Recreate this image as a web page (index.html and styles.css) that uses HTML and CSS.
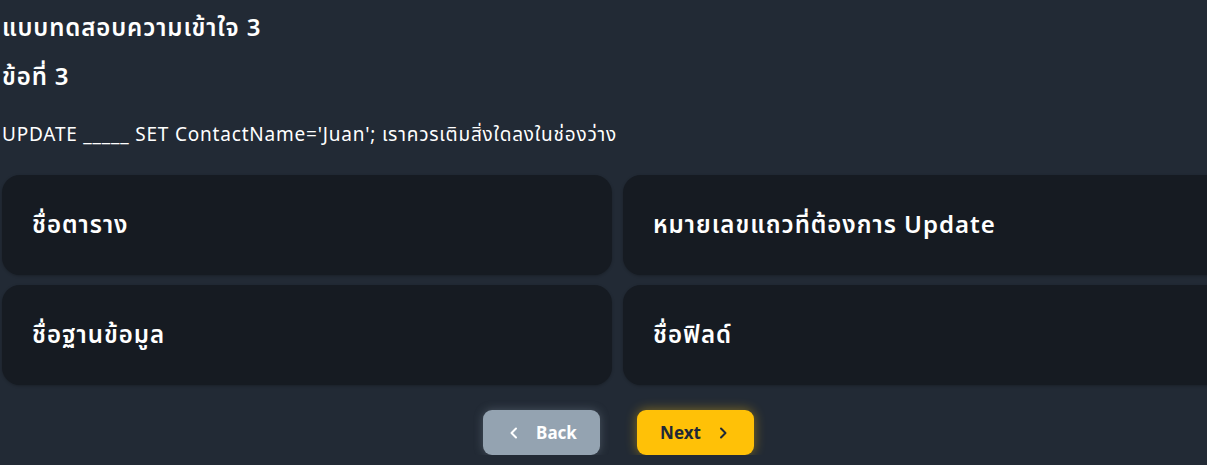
FILE: index.html
```html
<!DOCTYPE html>
<html lang="th">
<head>
<meta charset="utf-8">
<title>แบบทดสอบความเข้าใจ 3</title>
<link rel="stylesheet" href="styles.css">
</head>
<body>
<main class="quiz">
  <h1 class="quiz-title">แบบทดสอบความเข้าใจ 3</h1>
  <h2 class="quiz-number">ข้อที่ 3</h2>
  <p class="quiz-question">UPDATE _____ SET ContactName='Juan'; เราควรเติมสิ่งใดลงในช่องว่าง</p>
  <div class="choices">
    <button class="choice">ชื่อตาราง</button>
    <button class="choice">หมายเลขแถวที่ต้องการ Update</button>
    <button class="choice">ชื่อฐานข้อมูล</button>
    <button class="choice">ชื่อฟิลด์</button>
  </div>
  <nav class="nav">
    <button class="btn btn-back">
      <svg class="chev" viewBox="0 0 16 16" width="16" height="16"><path d="M10 3.5 5.5 8l4.5 4.5" fill="none" stroke="currentColor" stroke-width="2" stroke-linecap="round" stroke-linejoin="round"/></svg>
      <span>Back</span>
    </button>
    <button class="btn btn-next">
      <span>Next</span>
      <svg class="chev" viewBox="0 0 16 16" width="16" height="16"><path d="M6 3.5 10.5 8 6 12.5" fill="none" stroke="currentColor" stroke-width="2" stroke-linecap="round" stroke-linejoin="round"/></svg>
    </button>
  </nav>
</main>
</body>
</html>
```
FILE: styles.css
```css
html, body {
  margin: 0;
  padding: 0;
  background: #222a35;
  overflow: hidden;
}
body {
  font-family: "Noto Sans", "Noto Sans Thai", "Open Sans", sans-serif;
  color: #ffffff;
}
.quiz {
  width: 1233px;
  padding: 0 2px;
  box-sizing: content-box;
}
.quiz-title {
  margin: 0;
  padding-top: 10px;
  font-size: 24px;
  font-weight: 600;
  line-height: 34px;
  letter-spacing: 0.9px;
}
.quiz-number {
  margin: 15px 0 0;
  font-size: 24px;
  font-weight: 600;
  line-height: 34px;
  letter-spacing: 0.9px;
}
.quiz-question {
  margin: 27px 0 0;
  font-size: 19px;
  font-weight: 400;
  line-height: 28px;
  letter-spacing: 0.8px;
}
.choices {
  margin-top: 27px;
  display: grid;
  grid-template-columns: 610px 610px;
  column-gap: 11px;
  row-gap: 10px;
}
.choice {
  height: 100px;
  border: none;
  border-radius: 18px;
  background: #161b22;
  color: #ffffff;
  font-family: inherit;
  font-size: 24px;
  font-weight: 600;
  letter-spacing: 1px;
  text-align: left;
  padding: 0 30px;
  box-shadow: 0 1px 3px rgba(0,0,0,0.25);
}
.nav {
  margin-top: 25px;
  display: flex;
  justify-content: center;
  gap: 37px;
}
.btn {
  width: 117px;
  height: 45px;
  border: none;
  border-radius: 9px;
  font-family: inherit;
  font-size: 17px;
  font-weight: 700;
  display: flex;
  align-items: center;
  justify-content: center;
  gap: 14px;
}
.btn-back {
  background: #94a3b1;
  color: #ffffff;
  box-shadow: 0 0 10px rgba(148,163,177,0.35);
}
.btn-next {
  background: #ffc107;
  color: #1f2937;
  box-shadow: 0 0 12px rgba(255,193,7,0.45);
}
.chev {
  display: block;
}
```
